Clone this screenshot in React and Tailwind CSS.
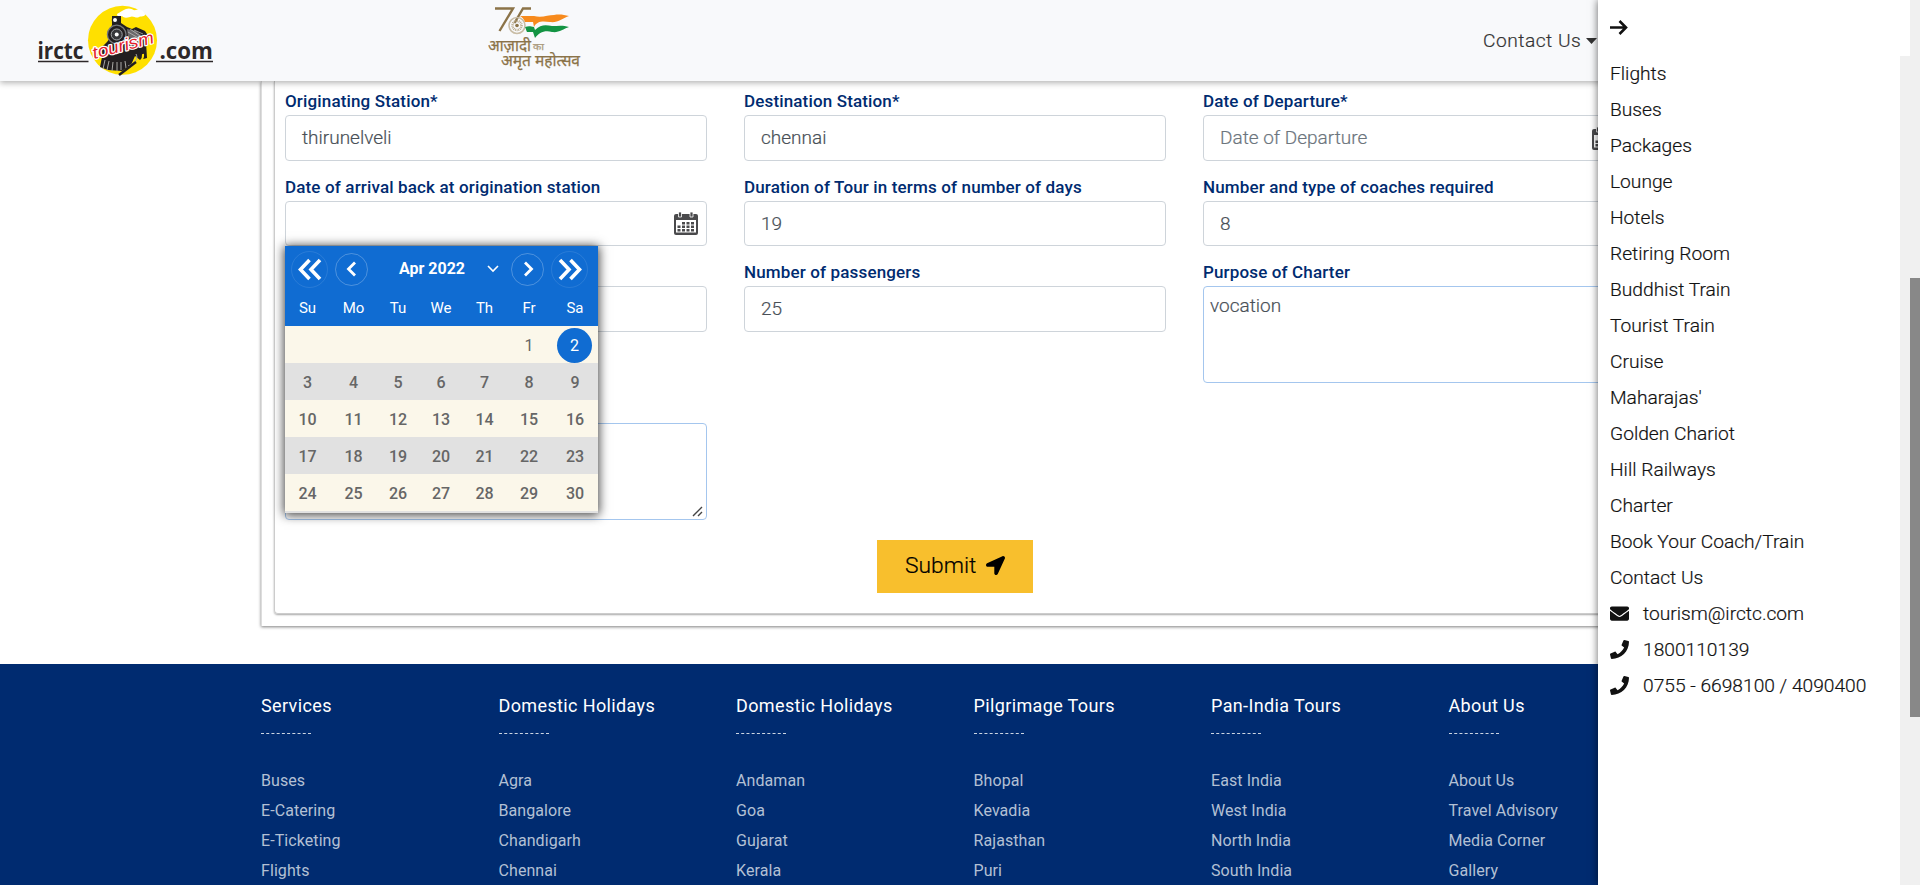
import React from "react";
import { FaEnvelope, FaPhone, FaLocationArrow } from "react-icons/fa";

const menu = ["Flights", "Buses", "Packages", "Lounge", "Hotels", "Retiring Room", "Buddhist Train", "Tourist Train", "Cruise", "Maharajas'", "Golden Chariot", "Hill Railways", "Charter", "Book Your Coach/Train", "Contact Us"];

const footer = [
  ["Services", ["Buses", "E-Catering", "E-Ticketing", "Flights"]],
  ["Domestic Holidays", ["Agra", "Bangalore", "Chandigarh", "Chennai"]],
  ["Domestic Holidays", ["Andaman", "Goa", "Gujarat", "Kerala"]],
  ["Pilgrimage Tours", ["Bhopal", "Kevadia", "Rajasthan", "Puri"]],
  ["Pan-India Tours", ["East India", "West India", "North India", "South India"]],
  ["About Us", ["About Us", "Travel Advisory", "Media Corner", "Gallery"]],
];

const weeks = [
  ["", "", "", "", "", "1", "2"],
  ["3", "4", "5", "6", "7", "8", "9"],
  ["10", "11", "12", "13", "14", "15", "16"],
  ["17", "18", "19", "20", "21", "22", "23"],
  ["24", "25", "26", "27", "28", "29", "30"],
];

const calCols = "grid grid-cols-[45px_47px_42px_44px_43px_46px_46px]";

function TrainLogo() {
  return (
    <svg width="180" height="76" viewBox="0 0 180 76" className="block">
      <circle cx="86.500" cy="36.300" r="34.500" fill="#ffe000" />
      <path d="M81 10c3-2 5-3 9-5 5-2 7 2 10 1 5-2 7 1 9 4 1 3-5 2-6 3-3 2-6-2-9 0-4 1-6 1-8-1-2 1-5 1-5-2z" fill="#fff" />
      <path d="M76 12h9v7l6 4 5 2 4-2 9 4 4 6-3 5 1 16-7 2-5-4-4 9-9 6-14-1-8-3 2-10-2-8 5-5 2-2 3-4-1-6 3-7z" fill="#231f20" />
      <path d="M91 25l9 2 10 8-8 2-10-4z" fill="#6a686a" />
      <path d="M92 28l14 8M94 25l13 9M98 26l9 4" stroke="#c9c8c6" strokeWidth="0.700" />
      <circle cx="80.700" cy="30.500" r="9.300" fill="#231f20" stroke="#77797c" strokeWidth="1.300" />
      <circle cx="80.700" cy="30.500" r="5.500" fill="#37373a" stroke="#a2a5a8" strokeWidth="1" />
      <circle cx="80.700" cy="30.500" r="2" fill="#fff" />
      <circle cx="79" cy="16" r="2.600" fill="#fff" stroke="#222" strokeWidth="1.200" />
      <path d="M107 50c1 7-6 10-11 13l-12 7" stroke="#ffe000" strokeWidth="2" fill="none" />
      <path d="M100 50c3 5-2 10-8 12M69 56l-2 9M73 57l-2 9M77 58l-1 9M81 58v9M85 58v8M89 57l1 7" stroke="#aaa9a5" strokeWidth="1" fill="none" />
      <path d="M83 71l17-13" stroke="#231f20" strokeWidth="2.500" />
      <g transform="rotate(-15 58 55)">
        <text x="58" y="55" textLength="63" lengthAdjust="spacingAndGlyphs" fontFamily="'Liberation Sans', sans-serif" fontStyle="italic" fontSize="17" fill="#e31e2d" stroke="#fff" strokeWidth="2.400" strokeLinejoin="round" paintOrder="stroke">tourism</text>
      </g>
      <g fontFamily="'Open Sans', sans-serif" fontWeight="700" fontSize="23" fill="#2d2829">
        <text x="1.500" y="55" textLength="46" lengthAdjust="spacingAndGlyphs">irctc</text>
        <text x="123.500" y="55" textLength="53.500" lengthAdjust="spacingAndGlyphs">.com</text>
      </g>
      <path d="M2 57.500h50.500M120 57.500h57" stroke="#2d2829" strokeWidth="1.300" />
    </svg>
  );
}

function MahotsavLogo() {
  return (
    <svg width="96" height="66" viewBox="0 0 96 66" className="block">
      <path d="M7 2.500h18L11.500 25M43 2.500H35L26.500 17" fill="none" stroke="#8b7348" strokeWidth="2.400" />
      <circle cx="29" cy="19.500" r="8" fill="none" stroke="#c9bda6" strokeWidth="1.600" />
      <circle cx="29" cy="19.500" r="4.500" fill="none" stroke="#b5a585" strokeWidth="2.500" strokeDasharray="0.800 0.800" />
      <circle cx="29" cy="19.500" r="1.800" fill="#8b7348" />
      <path d="M32 10h14c8 2 14-1 20-1 6-1 10 0 15 1-6 2-11 7-19 6-8-1-13-1-16 5l-1-5h-8c-1-3-3-5-5-6z" fill="#f78a1d" />
      <path d="M37 21c3-1 5-1 9 0l1 3c6-6 11-5 17-4 6 0 11-1 17 1-6 2-10 6-17 5-8-2-13 1-17 6l-2-6h-6c-1-2-1-3-2-5z" fill="#139443" />
      <g fill="#8b7348" stroke="#8b7348" strokeWidth="0.250" fontFamily="'Noto Sans Devanagari', 'Noto Sans', sans-serif">
        <text x="0" y="45" fontSize="15.500" textLength="43" lengthAdjust="spacingAndGlyphs">आज़ादी</text>
        <text x="45" y="44" fontSize="9" opacity="0.700" textLength="11" lengthAdjust="spacingAndGlyphs">का</text>
        <text x="13" y="59.500" fontSize="15.500" textLength="79" lengthAdjust="spacingAndGlyphs">अमृत महोत्सव</text>
      </g>
    </svg>
  );
}

function CalendarIcon() {
  return (
    <svg width="24" height="23" viewBox="0 0 24 23" className="block shrink-0">
      <path d="M2 2h20a2 2 0 0 1 2 2v17a2 2 0 0 1-2 2H2a2 2 0 0 1-2-2V4a2 2 0 0 1 2-2z" fill="#4a4a4c" />
      <path d="M2 8h20v12.500H2z" fill="#fff" />
      <path d="M4.500 0h3v5h-3zM16 0h3v5h-3z" fill="#4a4a4c" stroke="#fff" strokeWidth="0.800" />
      <path d="M8 10h3v2.500H8zM12.500 10h3v2.500h-3zM17 10h3v2.500h-3zM3.500 13.500h3V16h-3zM8 13.500h3V16H8zM12.500 13.500h3V16h-3zM17 13.500h3V16h-3zM3.500 17h3v2.500h-3zM8 17h3v2.500H8zM12.500 17h3v2.500h-3zM17 17h3v2.500h-3z" fill="#4a4a4c" />
    </svg>
  );
}

function Field({ label, value, placeholder, icon, tall = "h-[46px]" }) {
  return (
    <div className="flex w-[422px] flex-col">
      <div className="h-6 text-[17px] leading-6 font-medium tracking-[0.150px] text-[#002b70]">{label}</div>
      <div className={`mt-[2px] flex items-center justify-between rounded border border-[#ced4da] bg-white pr-2 pl-4 text-[19px] leading-6 font-light [-webkit-text-stroke:0.2px] ${tall} ${placeholder ? "text-[#6c757d]" : "text-[#495057]"}`}>
        <span>{value || placeholder}</span>
        {icon && <CalendarIcon />}
      </div>
    </div>
  );
}

function Area({ label, value, grip }) {
  return (
    <div className="flex w-[422px] flex-col">
      <div className="h-6 text-[17px] leading-6 font-medium tracking-[0.150px] text-[#002b70]">{label}</div>
      <div className="relative mt-[2px] h-[97px] rounded border border-[#a4c6ee] bg-white px-[6px] pt-[7px] text-[19px] leading-6 font-light text-[#495057] [-webkit-text-stroke:0.2px]">
        {value}
        {grip && (
          <svg width="11" height="11" viewBox="0 0 11 11" className="absolute right-[3px] bottom-[2px]">
            <path d="M1 10l9-9M6 10l4-4" stroke="#444" strokeWidth="1.400" />
          </svg>
        )}
      </div>
    </div>
  );
}

function Chevrons({ double, left }) {
  return (
    <svg width="26" height="24" viewBox="0 0 26 24" className={left ? "block" : "block -scale-x-100"}>
      {double ? (
        <path d="M12.500 2L3.500 11.500l9 9.500M23 2L14 11.500l9 9.500" fill="none" stroke="#fff" strokeWidth="3.600" />
      ) : (
        <path d="M16 4.500l-6.500 6.500 6.500 6.500" fill="none" stroke="#fff" strokeWidth="2.800" />
      )}
    </svg>
  );
}

function Calendar() {
  return (
    <div className="absolute top-[246px] left-[285px] h-[267px] w-[313px] bg-[#e1e1e1] shadow-[0_1px_10px_1px_rgba(0,0,0,0.75)]">
      <div className="h-20 bg-[#106cd2] text-white">
        <div className="flex h-[47px] items-center pl-[6px]">
          <div className="flex size-[37px] items-center justify-center rounded-full border border-white/10"><Chevrons double left /></div>
          <div className="ml-[7px] flex size-[33px] items-center justify-center rounded-full border border-white/25"><Chevrons left /></div>
          <div className="-mt-px ml-[31px] w-[68px] text-base font-bold whitespace-nowrap">Apr 2022</div>
          <svg width="12" height="8" viewBox="0 0 12 8" className="-mt-px ml-[20px]"><path d="M1 1l5 5 5-5" fill="none" stroke="#fff" strokeWidth="1.600" /></svg>
          <div className="ml-3 flex size-[33px] items-center justify-center rounded-full border border-white/25"><Chevrons /></div>
          <div className="ml-[7px] flex size-[37px] items-center justify-center rounded-full border border-white/10"><Chevrons double /></div>
        </div>
        <div className={`${calCols} h-[30px] items-center text-center text-[15px]`}>
          {["Su", "Mo", "Tu", "We", "Th", "Fr", "Sa"].map((d) => <span key={d}>{d}</span>)}
        </div>
      </div>
      {weeks.map((week, i) => (
        <div key={i} className={`${calCols} h-[37px] items-center text-center text-base text-[#666] ${i % 2 ? "bg-[#e1e1e1]" : "bg-[#fbf7ea]"}`}>
          {week.map((d, j) =>
            d === "2" ? (
              <span key={j} className="mt-[2px] ml-[5px] flex size-[35px] items-center justify-center rounded-full bg-[#106cd2] text-white">2</span>
            ) : (
              <span key={j} className={d === "1" ? "pt-[2px]" : "pt-[2px] font-medium"}>{d}</span>
            )
          )}
        </div>
      ))}
    </div>
  );
}

export default function App() {
  return (
    <div className="relative h-[885px] w-[1920px] overflow-hidden bg-white font-['Roboto',sans-serif]">
      <header className="relative z-10 flex h-[81px] items-start bg-[#f8f9fb] shadow-[0_2px_6px_rgba(0,0,0,0.3)]">
        <div className="ml-9 pt-[4px]"><TrainLogo /></div>
        <div className="ml-[272px] pt-[6px]"><MahotsavLogo /></div>
        <div className="ml-[899px] flex items-center pt-[27px] text-[19.200px] leading-7 font-light tracking-[0.500px] text-[#333] [-webkit-text-stroke:0.2px]">
          <span className="w-[98px] whitespace-nowrap">Contact Us</span>
          <svg width="11" height="6" className="ml-[5px]"><path d="M0 0h11L5.500 6z" fill="#333" /></svg>
        </div>
      </header>

      <main className="h-[583px] pl-[261px]">
        <div className="h-[545px] w-[1400px] border-l border-[#ddd] pl-3 shadow-[0_1px_3px_rgba(0,0,0,0.5)]">
          <div className="h-[533px] w-[1376px] rounded-b border-x border-b border-[#ccc] pl-[10px] shadow-[0_1px_2px_rgba(0,0,0,0.35)]">
            <div className="flex gap-[37px] pt-2">
              <Field label="Originating Station*" value="thirunelveli" />
              <Field label="Destination Station*" value="chennai" />
              <Field label="Date of Departure*" placeholder="Date of Departure" icon />
            </div>
            <div className="mt-[14px] flex gap-[37px]">
              <Field label="Date of arrival back at origination station" icon tall="h-[45px]" />
              <Field label="Duration of Tour in terms of number of days" value="19" tall="h-[45px]" />
              <Field label="Number and type of coaches required" value="8" tall="h-[45px]" />
            </div>
            <div className="mt-[14px] flex h-[123px] gap-[37px]">
              <Field label="" value="" />
              <Field label="Number of passengers" value="25" />
              <Area label="Purpose of Charter" value="vocation" />
            </div>
            <div className="mt-[14px]">
              <Area label="" value="" grip />
            </div>
            <div className="mt-5 ml-[592px] flex h-[53px] w-[156px] items-center bg-[#f8bf2d] pl-7 text-[22.800px] font-light text-black [-webkit-text-stroke:0.2px]">
              <span className="w-[70px]">Submit</span>
              <FaLocationArrow className="mb-[3px] ml-[11px]" size={19} />
            </div>
          </div>
        </div>
      </main>

      <footer className="flex h-[221px] bg-[#002b70] pt-7 pl-[261px]">
        {footer.map(([title, links], i) => (
          <div key={i} className="w-[237.500px] shrink-0">
            <div className="text-lg leading-7 tracking-[0.370px] text-white">{title}</div>
            <div className="mt-[13px] w-[50px] border-t border-dashed border-white/80" />
            <div className="mt-[32px] text-base leading-[30px] tracking-[0.080px] text-[#b3c0d4]">
              {links.map((l) => <div key={l}>{l}</div>)}
            </div>
          </div>
        ))}
      </footer>

      <Calendar />

      <aside className="absolute top-0 left-[1598px] z-20 flex h-[885px] w-[322px] bg-white shadow-[0_0_8px_rgba(0,0,0,0.6)]">
        <div className="w-[302px] pt-[20px] pl-3 text-[#111]">
          <svg width="18" height="15" viewBox="0 0 18 15" className="block"><path d="M0 7.500h16M9.500 1l6.500 6.500L9.500 14" fill="none" stroke="#111" strokeWidth="2.600" /></svg>
          <nav className="mt-[21px] text-[19.200px] leading-9 font-light text-[#111] [-webkit-text-stroke:0.2px]">
            {menu.map((m) => <div key={m}>{m}</div>)}
            <div className="flex items-center"><FaEnvelope size={19} className="-mt-[2px]" /><span className="ml-[14px]">tourism@irctc.com</span></div>
            <div className="flex items-center"><FaPhone size={19} className="-mt-[2px]" /><span className="ml-[14px]">1800110139</span></div>
            <div className="flex items-center"><FaPhone size={19} className="-mt-[2px]" /><span className="ml-[14px] whitespace-nowrap">0755 - 6698100 / 4090400</span></div>
          </nav>
        </div>
        <div className="mt-14 w-[10px] bg-[#f0f0f0]" />
        <div className="w-[10px] bg-[#f0f0f0] pt-[278px]"><div className="h-[439px] bg-[#888]" /></div>
      </aside>
    </div>
  );
}
